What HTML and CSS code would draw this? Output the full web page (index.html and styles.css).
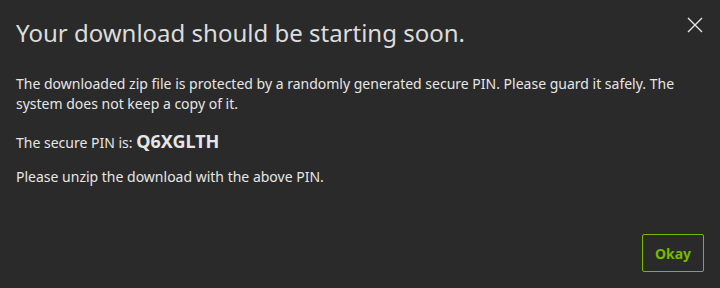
FILE: index.html
```html
<!DOCTYPE html>
<html>
<head>
<meta charset="utf-8">
<link rel="stylesheet" href="styles.css">
</head>
<body>
<div class="dialog">
  <div class="header">
    <h1 class="title">Your download should be starting soon.</h1>
    <button class="close" aria-label="Close">
      <svg width="16" height="16" viewBox="0 0 16 16"><path d="M1 1L15 15M15 1L1 15" stroke="#e6e6e6" stroke-width="1.4" fill="none"/></svg>
    </button>
  </div>
  <div class="body">
    <p class="text intro">The downloaded zip file is protected by a randomly generated secure PIN. Please guard it safely. The system does not keep a copy of it.</p>
    <p class="text pin-line">The secure PIN is: <span class="pin">Q6XGLTH</span></p>
    <p class="text">Please unzip the download with the above PIN.</p>
  </div>
  <div class="footer">
    <button class="okay">Okay</button>
  </div>
</div>
</body>
</html>
```
FILE: styles.css
```css
html, body {
  margin: 0;
  padding: 0;
  background: #2a2a2a;
}
.dialog {
  width: 720px;
  height: 288px;
  box-sizing: border-box;
  background: #2a2a2a;
  color: #e6e6e6;
  font-family: "Noto Sans", sans-serif;
  display: flex;
  flex-direction: column;
  padding: 0 16px;
}
.header {
  display: flex;
  justify-content: space-between;
  align-items: flex-start;
  padding-top: 16.5px;
}
.title {
  margin: 0;
  font-weight: 400;
  font-size: 24px;
  line-height: 32px;
  color: #dcdcdc;
}
.close {
  background: none;
  border: none;
  padding: 0;
  margin: 0 1px 0 0;
  width: 16px;
  height: 16px;
  cursor: pointer;
}
.body {
  padding-top: 25.5px;
}
.text {
  margin: 0;
  font-size: 14px;
  line-height: 20px;
  color: #e6e6e6;
}
.intro {
  margin-bottom: 15px;
}
.pin-line {
  line-height: 24px;
  margin-bottom: 12px;
}
.pin {
  font-weight: 700;
  font-size: 18px;
}
.footer {
  margin-top: auto;
  display: flex;
  justify-content: flex-end;
  padding-bottom: 16px;
}
.okay {
  background: transparent;
  border: 1px solid #76b900;
  border-radius: 2px;
  color: #76b900;
  font-family: "Noto Sans", sans-serif;
  font-weight: 700;
  font-size: 14px;
  width: 62px;
  height: 38px;
  padding: 0;
}
```
